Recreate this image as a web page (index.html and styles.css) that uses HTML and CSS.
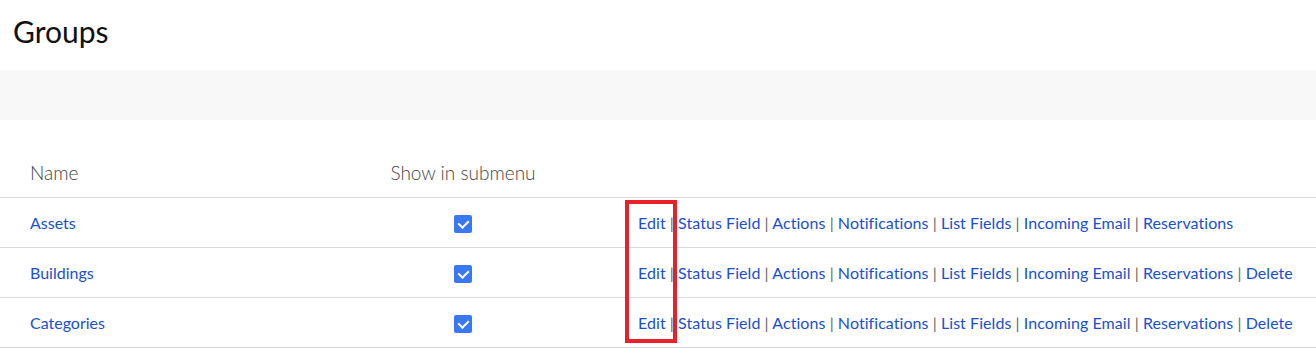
FILE: index.html
```html
<!DOCTYPE html>
<html lang="en">
<head>
  <meta charset="UTF-8" />
  <title>Groups</title>
  <link rel="stylesheet" href="styles.css">
</head>
<body>

  <h1 class="page-title">Groups</h1>

  <div class="toolbar"></div>

  <div class="table-wrap">
    <table class="groups">
      <thead>
        <tr>
          <th class="col-name">Name</th>
          <th class="col-show">Show in submenu</th>
          <th class="col-links"></th>
        </tr>
      </thead>
      <tbody>
        <tr>
          <td class="col-name"><a href="#">Assets</a></td>
          <td class="col-show"><span class="check"></span></td>
          <td class="col-links">
            <a href="#">Edit</a> <span class="sep">|</span> <a href="#">Status Field</a> <span class="sep">|</span> <a href="#">Actions</a> <span class="sep">|</span> <a href="#">Notifications</a> <span class="sep">|</span> <a href="#">List Fields</a> <span class="sep">|</span> <a href="#">Incoming Email</a> <span class="sep">|</span> <a href="#">Reservations</a>
          </td>
        </tr>
        <tr>
          <td class="col-name"><a href="#">Buildings</a></td>
          <td class="col-show"><span class="check"></span></td>
          <td class="col-links">
            <a href="#">Edit</a> <span class="sep">|</span> <a href="#">Status Field</a> <span class="sep">|</span> <a href="#">Actions</a> <span class="sep">|</span> <a href="#">Notifications</a> <span class="sep">|</span> <a href="#">List Fields</a> <span class="sep">|</span> <a href="#">Incoming Email</a> <span class="sep">|</span> <a href="#">Reservations</a> <span class="sep">|</span> <a href="#">Delete</a>
          </td>
        </tr>
        <tr>
          <td class="col-name"><a href="#">Categories</a></td>
          <td class="col-show"><span class="check"></span></td>
          <td class="col-links">
            <a href="#">Edit</a> <span class="sep">|</span> <a href="#">Status Field</a> <span class="sep">|</span> <a href="#">Actions</a> <span class="sep">|</span> <a href="#">Notifications</a> <span class="sep">|</span> <a href="#">List Fields</a> <span class="sep">|</span> <a href="#">Incoming Email</a> <span class="sep">|</span> <a href="#">Reservations</a> <span class="sep">|</span> <a href="#">Delete</a>
          </td>
        </tr>
      </tbody>
    </table>

    <div class="highlight"></div>
  </div>

</body>
</html>
```

FILE: styles.css
```css
body {
  font-family: Lato, "Open Sans", sans-serif;
  background: #fff;
  color: #222;
  margin: 0;
}

.page-title {
  font-size: 30px;
  font-weight: 400;
  color: #111;
  margin: 0;
  padding: 13px 13px 0;
  height: 70px;
  box-sizing: border-box;
  line-height: 36px;
}

.toolbar {
  height: 50px;
  background: #f8f8f8;
}

.table-wrap {
  position: relative;
  padding-top: 27px;
}

.groups {
  width: 100%;
  border-collapse: collapse;
  font-size: 16px;
}

.groups th {
  font-weight: 300;
  font-size: 19px;
  color: #444;
  text-align: left;
  height: 50px;
  padding: 0;
  border-bottom: 1px solid #d8d8d8;
}

.groups td {
  height: 49px;
  padding: 0;
  border-bottom: 1px solid #d8d8d8;
}

.col-name {
  width: 270px;
  padding-left: 30px !important;
}

.groups th.col-show,
.groups td.col-show {
  width: 326px;
  text-align: center;
}

.col-links {
  padding-left: 12px !important;
  white-space: nowrap;
  letter-spacing: 0.06px;
}

.groups a {
  color: #1a4fd0;
  text-decoration: none;
}

.sep {
  color: #666;
}

.check {
  display: inline-block;
  width: 18px;
  height: 18px;
  border-radius: 2px;
  background: #3a78f2;
  position: relative;
  vertical-align: middle;
}

.check::after {
  content: "";
  position: absolute;
  left: 6px;
  top: 3px;
  width: 5px;
  height: 8px;
  border: solid #fff;
  border-width: 0 2px 2px 0;
  transform: rotate(45deg);
}

.highlight {
  position: absolute;
  left: 625px;
  top: 80px;
  width: 44px;
  height: 135px;
  border: 4px solid #e8202a;
}
```
